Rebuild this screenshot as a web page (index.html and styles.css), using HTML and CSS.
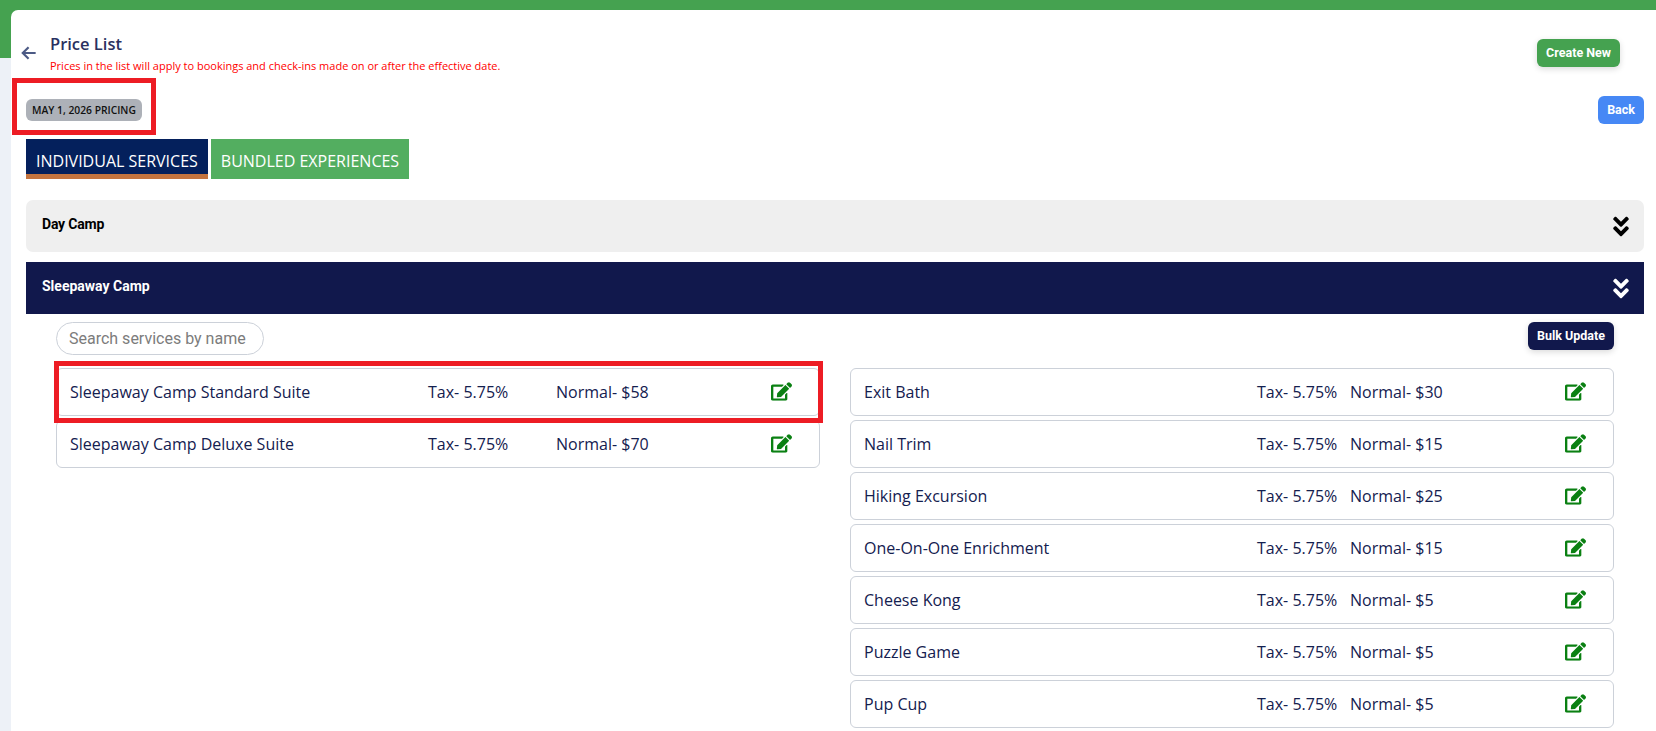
FILE: index.html
```html
<!DOCTYPE html>
<html lang="en">
<head>
    <meta charset="UTF-8">
    <meta name="viewport" content="width=device-width, initial-scale=1.0">
    <title>Price List</title>
    <link rel="stylesheet" href="styles.css">
</head>
<body>
    <div class="shell">
        <main class="card">
            <header class="page-head">
                <svg class="back-arrow" viewBox="0 0 24 24" aria-hidden="true"><path d="M20 12H5M11.5 5L4.5 12l7 7"/></svg>
                <div class="page-title">
                    <h1>Price List</h1>
                    <p>Prices in the list will apply to bookings and check-ins made on or after the effective date.</p>
                </div>
                <button class="btn btn-green" type="button">Create New</button>
            </header>

            <div class="date-row">
                <span class="date-badge">MAY 1, 2026 PRICING</span>
                <button class="btn btn-blue" type="button">Back</button>
            </div>

            <nav class="tabs">
                <a class="tab tab-active" href="#">INDIVIDUAL SERVICES</a>
                <a class="tab" href="#">BUNDLED EXPERIENCES</a>
            </nav>

            <section class="accordion">
                <span>Day Camp</span>
                <svg class="chevrons" viewBox="0 0 320 512" aria-hidden="true"><path d="M143 256.3L7 120.3c-9.4-9.4-9.4-24.6 0-33.9l22.6-22.6c9.4-9.4 24.6-9.4 33.9 0l96.4 96.4 96.4-96.4c9.4-9.4 24.6-9.4 33.9 0L313 86.3c9.4 9.4 9.4 24.6 0 33.9l-136 136c-9.4 9.5-24.6 9.5-34 .1zm34 192l136-136c9.4-9.4 9.4-24.6 0-33.9l-22.6-22.6c-9.4-9.4-24.6-9.4-33.9 0L160 352.1l-96.4-96.4c-9.4-9.4-24.6-9.4-33.9 0L7 278.3c-9.4 9.4-9.4 24.6 0 33.9l136 136c9.4 9.5 24.6 9.5 34 .1z"/></svg>
            </section>
            <section class="accordion accordion-open">
                <span>Sleepaway Camp</span>
                <svg class="chevrons" viewBox="0 0 320 512" aria-hidden="true"><path d="M143 256.3L7 120.3c-9.4-9.4-9.4-24.6 0-33.9l22.6-22.6c9.4-9.4 24.6-9.4 33.9 0l96.4 96.4 96.4-96.4c9.4-9.4 24.6-9.4 33.9 0L313 86.3c9.4 9.4 9.4 24.6 0 33.9l-136 136c-9.4 9.5-24.6 9.5-34 .1zm34 192l136-136c9.4-9.4 9.4-24.6 0-33.9l-22.6-22.6c-9.4-9.4-24.6-9.4-33.9 0L160 352.1l-96.4-96.4c-9.4-9.4-24.6-9.4-33.9 0L7 278.3c-9.4 9.4-9.4 24.6 0 33.9l136 136c9.4 9.5 24.6 9.5 34 .1z"/></svg>
            </section>

            <div class="panel">
                <div class="panel-tools">
                    <input class="search" type="text" placeholder="Search services by name">
                    <button class="btn btn-navy" type="button">Bulk Update</button>
                </div>
                <div class="columns">
                    <ul class="service-list list-left">
                        <li class="service"><span>Sleepaway Camp Standard Suite</span><span>Tax- 5.75%</span><span>Normal- $58</span><svg class="edit-icon" viewBox="0 0 576 512"><use href="#edit"/></svg></li>
                        <li class="service"><span>Sleepaway Camp Deluxe Suite</span><span>Tax- 5.75%</span><span>Normal- $70</span><svg class="edit-icon" viewBox="0 0 576 512"><use href="#edit"/></svg></li>
                    </ul>
                    <ul class="service-list list-right">
                        <li class="service"><span>Exit Bath</span><span>Tax- 5.75%</span><span>Normal- $30</span><svg class="edit-icon" viewBox="0 0 576 512"><use href="#edit"/></svg></li>
                        <li class="service"><span>Nail Trim</span><span>Tax- 5.75%</span><span>Normal- $15</span><svg class="edit-icon" viewBox="0 0 576 512"><use href="#edit"/></svg></li>
                        <li class="service"><span>Hiking Excursion</span><span>Tax- 5.75%</span><span>Normal- $25</span><svg class="edit-icon" viewBox="0 0 576 512"><use href="#edit"/></svg></li>
                        <li class="service"><span>One-On-One Enrichment</span><span>Tax- 5.75%</span><span>Normal- $15</span><svg class="edit-icon" viewBox="0 0 576 512"><use href="#edit"/></svg></li>
                        <li class="service"><span>Cheese Kong</span><span>Tax- 5.75%</span><span>Normal- $5</span><svg class="edit-icon" viewBox="0 0 576 512"><use href="#edit"/></svg></li>
                        <li class="service"><span>Puzzle Game</span><span>Tax- 5.75%</span><span>Normal- $5</span><svg class="edit-icon" viewBox="0 0 576 512"><use href="#edit"/></svg></li>
                        <li class="service"><span>Pup Cup</span><span>Tax- 5.75%</span><span>Normal- $5</span><svg class="edit-icon" viewBox="0 0 576 512"><use href="#edit"/></svg></li>
                    </ul>
                </div>
            </div>

            <!-- red annotation boxes drawn over the page -->
            <div class="mark mark-badge"></div>
            <div class="mark mark-row"></div>
        </main>
    </div>

    <svg class="icon-defs" aria-hidden="true">
        <symbol id="edit" viewBox="0 0 576 512"><path d="M402.6 83.2l90.2 90.2c3.8 3.8 3.8 10 0 13.8L274.4 405.6l-92.8 10.3c-12.4 1.4-22.9-9.1-21.5-21.5l10.3-92.8L388.8 83.2c3.8-3.8 10-3.8 13.8 0zm162-22.9l-48.8-48.8c-15.2-15.2-39.9-15.2-55.2 0l-35.4 35.4c-3.8 3.8-3.8 10 0 13.8l90.2 90.2c3.8 3.8 10 3.8 13.8 0l35.4-35.4c15.2-15.3 15.2-40 0-55.2zM384 346.2V448H64V128h229.8c3.2 0 6.2-1.3 8.5-3.5l40-40c7.6-7.6 2.2-20.5-8.5-20.5H48C21.5 64 0 85.5 0 112v352c0 26.5 21.5 48 48 48h352c26.5 0 48-21.5 48-48V306.2c0-10.7-12.9-16-20.5-8.5l-40 40c-2.2 2.3-3.5 5.3-3.5 8.5z"/></symbol>
    </svg>
</body>
</html>
```

FILE: styles.css
```css
html, body {
    margin: 0;
    height: 100%;
    overflow: hidden;
}
body {
    font-family: "Open Sans", Arial, sans-serif;
    background-color: #edf1f7;
}
.shell {
    height: 100%;
    box-sizing: border-box;
    padding: 10px 0 0 11px;
    background: linear-gradient(#45a250 58px, #edf1f7 58px);
}
.card {
    position: relative;
    height: 100%;
    box-sizing: border-box;
    padding: 0 12px 0 15px;
    background-color: #ffffff;
    border-top-left-radius: 7px;
}
.icon-defs {
    display: none;
}

/* header */
.page-head {
    display: flex;
    align-items: flex-start;
    height: 86px;
    box-sizing: border-box;
    padding-top: 23px;
}
.back-arrow {
    flex: none;
    width: 20px;
    height: 20px;
    margin: 10px 11px 0 -7px;
    fill: none;
    stroke: #4c5a85;
    stroke-width: 2.6;
}
.page-title {
    flex: 1;
}
.page-title h1 {
    margin: 0;
    font-size: 16.5px;
    line-height: 22px;
    font-weight: 600;
    color: #2a3160;
}
.page-title p {
    margin: 4px 0 0;
    font-size: 11px;
    line-height: 14px;
    color: #ff0000;
}
.btn {
    flex: none;
    border: none;
    border-radius: 6px;
    height: 28px;
    padding: 0 9px 2px;
    font-family: Roboto, Arial, sans-serif;
    font-size: 12.5px;
    font-weight: 700;
    color: #ffffff;
    cursor: pointer;
}
.btn-green {
    margin: 6px 24px 0 0;
    background-color: #45a250;
    box-shadow: 0 2px 6px rgba(0, 0, 0, 0.15);
}
.btn-blue {
    background-color: #4688f5;
}
.btn-navy {
    background-color: #11184c;
    box-shadow: 0 2px 6px rgba(0, 0, 0, 0.15);
}

.date-row {
    display: flex;
    align-items: center;
    justify-content: space-between;
    height: 28px;
}
.date-badge {
    padding: 0 6px;
    height: 22px;
    line-height: 22px;
    border-radius: 6px;
    background-color: #adb1b8;
    font-size: 10.3px;
    font-weight: 600;
    color: #111111;
}

/* tabs */
.tabs {
    display: flex;
    gap: 3px;
    margin-top: 15px;
}
.tab {
    height: 40px;
    line-height: 44px;
    padding: 0 10px;
    box-sizing: border-box;
    background-color: #53ae60;
    font-size: 16px;
    color: #ffffff;
    text-decoration: none;
}
.tab-active {
    background-color: #04205c;
    border-bottom: 5px solid #c4743f;
}

/* accordion */
.accordion {
    display: flex;
    align-items: center;
    justify-content: space-between;
    height: 52px;
    margin-top: 21px;
    padding: 0 15px 0 16px;
    box-sizing: border-box;
    background-color: #efefef;
    border-radius: 7px;
    font-family: Roboto, Arial, sans-serif;
    font-size: 14px;
    font-weight: 700;
    letter-spacing: -0.2px;
    color: #000000;
}
.accordion > span {
    margin-bottom: 4px;
}
.accordion-open {
    margin-top: 10px;
    background-color: #11184c;
    border-radius: 0;
    letter-spacing: 0;
    color: #ffffff;
}
.chevrons {
    width: 16px;
    height: 25px;
    fill: currentColor;
}

/* services */
.panel {
    padding: 8px 30px 0;
}
.panel-tools {
    display: flex;
    align-items: flex-start;
    justify-content: space-between;
    height: 46px;
}
.search {
    width: 208px;
    height: 33px;
    box-sizing: border-box;
    padding: 0 12px;
    border: 1px solid #ccd1d9;
    border-radius: 17px;
    outline: none;
    font-family: Roboto, Arial, sans-serif;
    font-size: 16px;
}
.search::placeholder {
    color: #7c7c7c;
    opacity: 1;
}
.columns {
    display: grid;
    grid-template-columns: 764px 764px;
    justify-content: space-between;
    align-items: start;
}
.service-list {
    list-style: none;
    margin: 0;
    padding: 0;
    display: flex;
    flex-direction: column;
    gap: 4px;
}
.service {
    display: grid;
    align-items: center;
    height: 48px;
    box-sizing: border-box;
    padding: 0 0 1px 13px;
    border: 1px solid #ccd1d9;
    border-radius: 6px;
    font-size: 16px;
    color: #14204f;
}
.list-left .service {
    grid-template-columns: 358px 128px 215px 21px;
}
.list-right .service {
    grid-template-columns: 393px 93px 215px 21px;
}
.edit-icon {
    width: 21px;
    height: 19px;
    fill: #0a8012;
}

/* red annotation boxes */
.mark {
    position: absolute;
    box-sizing: border-box;
    border: 5px solid #ed1c24;
}
.mark-badge {
    left: 1px;
    top: 68px;
    width: 144px;
    height: 57px;
}
.mark-row {
    left: 43px;
    top: 351px;
    width: 769px;
    height: 62px;
}
```
